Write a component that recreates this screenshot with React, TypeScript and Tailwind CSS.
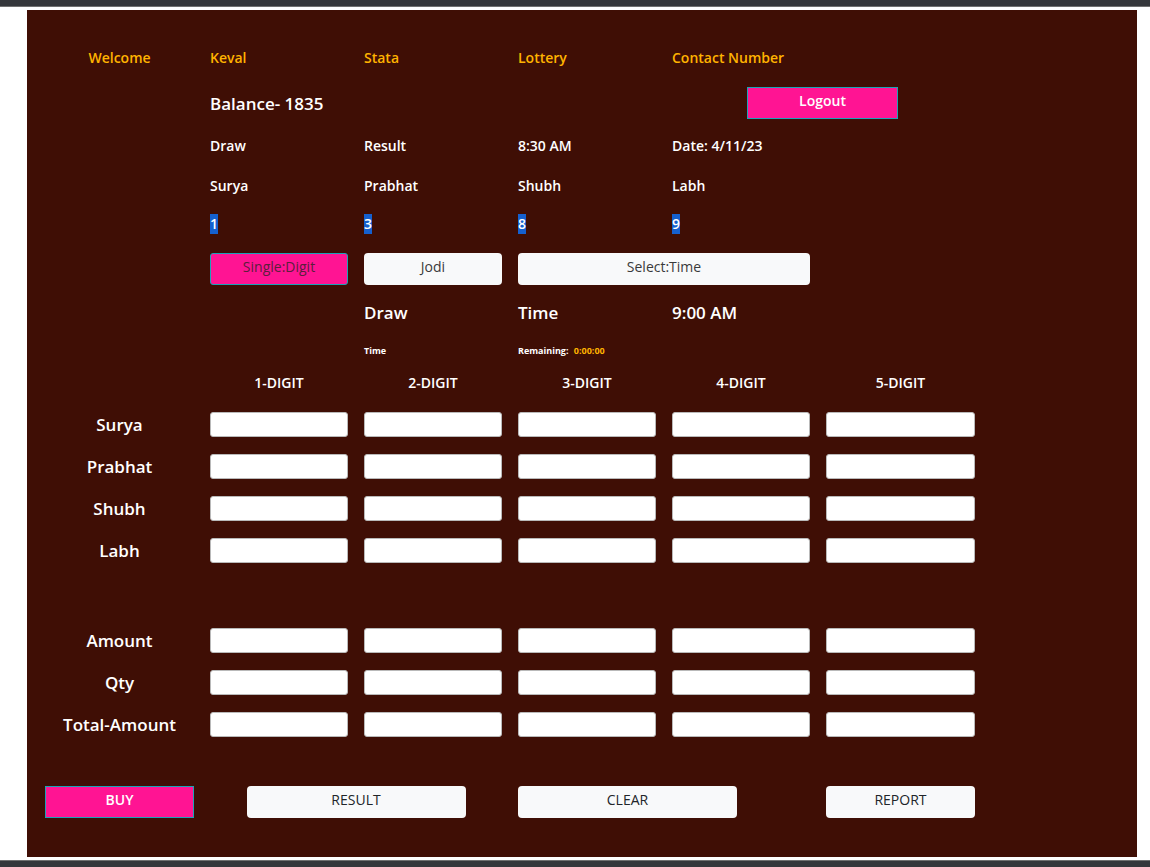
import React from "react";

const cols = "grid grid-cols-[149px_138px_138px_138px_138px_149px] gap-x-4 items-center";
const draws = ["Surya", "Prabhat", "Shubh", "Labh"];
const totals = ["Amount", "Qty", "Total-Amount"];
const digits = ["1-DIGIT", "2-DIGIT", "3-DIGIT", "4-DIGIT", "5-DIGIT"];

const Field = () => (
  <input
    type="text"
    className="h-[25px] w-full rounded-[3px] border border-[#b9b9b9] bg-white outline-none"
  />
);

const InputRow = ({ label }: { label: string }) => (
  <div className={cols}>
    <div className="text-center text-[17px] font-semibold leading-[25px] text-white">{label}</div>
    {digits.map((d) => (
      <Field key={d} />
    ))}
  </div>
);

const Picked = ({ n }: { n: string }) => (
  <span className="inline-block h-[20px] bg-[#1560cf] text-[14px] font-semibold leading-[19px] text-white">{n}</span>
);

export default function App() {
  return (
    <div
      className="h-[867px] w-[1150px] overflow-hidden bg-white"
      style={{ fontFamily: '"Open Sans", "Noto Sans", sans-serif' }}
    >
      <div className="h-[6px] bg-[#35373b]" />
      <div className="h-px bg-[#707070]" />
      <div className="mt-[3px] ml-[27px] h-[847px] w-[1110px] bg-[#3f0e05] pt-[27px] pl-[18px]">
        {/* header */}
        <div className={`${cols} h-[40px] text-[14px] font-semibold text-[#ffb300]`}>
          <div className="text-center">Welcome</div>
          <div>Keval</div>
          <div>Stata</div>
          <div>Lottery</div>
          <div className="whitespace-nowrap">Contact Number</div>
        </div>
        <div className={`${cols} h-[52px]`}>
          <div />
          <div className="whitespace-nowrap pt-[2px] text-[17px] font-semibold text-white">Balance- 1835</div>
          <button className="col-span-2 col-start-5 ml-[75px] h-[32px] w-[151px] border border-[#1aa3b8] bg-[#ff1493] pb-[5px] text-[14px] font-semibold text-white">
            Logout
          </button>
        </div>
        <div className={`${cols} h-[33px] text-[14px] font-semibold text-white`}>
          <div />
          <div>Draw</div>
          <div>Result</div>
          <div>8:30 AM</div>
          <div>Date: 4/11/23</div>
        </div>
        <div className={`${cols} h-[46px] text-[14px] font-semibold text-white`}>
          <div />
          <div>Surya</div>
          <div>Prabhat</div>
          <div>Shubh</div>
          <div>Labh</div>
        </div>
        <div className={`${cols} h-[30px]`}>
          <div />
          <div><Picked n="1" /></div>
          <div><Picked n="3" /></div>
          <div><Picked n="8" /></div>
          <div><Picked n="9" /></div>
        </div>
        <div className={`${cols} h-[62px] text-[14px] text-[#3a3a3a]`}>
          <div />
          <button className="h-[32px] rounded-[3px] border border-[#1aa3b8] bg-[#ff1493] pb-[5px] text-[#5b1f3c]">
            Single:Digit
          </button>
          <button className="h-[32px] rounded-[4px] bg-[#f8f9fa] pb-[5px]">Jodi</button>
          <button className="col-span-2 h-[32px] rounded-[4px] bg-[#f8f9fa] pb-[5px]">Select:Time</button>
        </div>
        <div className={`${cols} h-[26px] text-[17px] font-semibold text-white`}>
          <div />
          <div />
          <div>Draw</div>
          <div>Time</div>
          <div>9:00 AM</div>
        </div>
        <div className={`${cols} h-[50px] text-[9px] font-bold text-white`}>
          <div />
          <div />
          <div>Time</div>
          <div className="whitespace-nowrap">
            Remaining: <span className="ml-[3px] text-[#ffb300]">0:00:00</span>
          </div>
        </div>
        <div className={`${cols} h-[14px] text-[14px] font-semibold leading-[14px] text-white`}>
          <div />
          {digits.map((d) => (
            <div key={d} className="text-center">{d}</div>
          ))}
        </div>

        {/* bets */}
        <div className="mt-[22px] flex flex-col gap-y-[17px]">
          {draws.map((d) => (
            <InputRow key={d} label={d} />
          ))}
        </div>
        <div className="mt-[65px] flex flex-col gap-y-[17px]">
          {totals.map((t) => (
            <InputRow key={t} label={t} />
          ))}
        </div>

        {/* actions */}
        <div className={`${cols} mt-[49px] text-[14px]`}>
          <button className="h-[32px] border border-[#1aa3b8] bg-[#ff1493] pb-[5px] font-semibold text-white">BUY</button>
          <button className="col-span-2 h-[32px] w-[219px] justify-self-center rounded-[4px] bg-[#f8f9fa] pb-[5px] text-[#212529]">
            RESULT
          </button>
          <button className="col-span-2 h-[32px] w-[219px] justify-self-start rounded-[4px] bg-[#f8f9fa] pb-[5px] text-[#212529]">
            CLEAR
          </button>
          <button className="h-[32px] rounded-[4px] bg-[#f8f9fa] pb-[5px] text-[#212529]">REPORT</button>
        </div>
      </div>
      <div className="mt-[3px] h-px bg-[#707070]" />
      <div className="h-[6px] bg-[#35373b]" />
    </div>
  );
}
